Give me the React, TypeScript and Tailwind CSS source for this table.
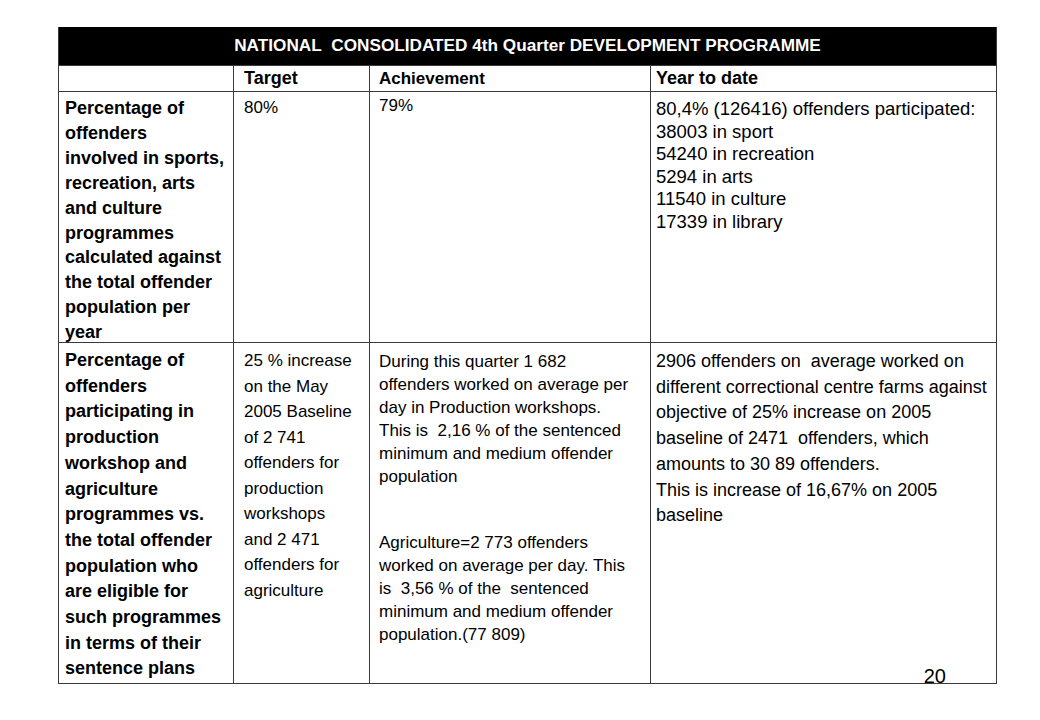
import React from "react";

const ff = { fontFamily: '"Liberation Sans", Arial, sans-serif' };

function Lines({ lines }: { lines: string[] }) {
  return (
    <>
      {lines.map((l, i) => (
        <div key={i} className="whitespace-pre">
          {l === "" ? "\u00a0" : l}
        </div>
      ))}
    </>
  );
}

export default function App() {
  const cell = "border-l border-t border-[#3a3a3a]";
  return (
    <div className="w-[1040px] h-[720px] bg-white text-black" style={ff}>
      <div className="ml-[58px] pt-[27px]">
        <div className="grid grid-cols-[175px_136px_281px_346px] w-[939px] border-r border-b border-[#3a3a3a]">
          {/* title */}
          <div className="col-span-4 h-[38px] bg-black border-l border-[#3a3a3a] flex items-center justify-center text-white font-bold text-[17.2px]">
            NATIONAL&nbsp; CONSOLIDATED 4th Quarter DEVELOPMENT PROGRAMME
          </div>
          {/* header row */}
          <div className={`${cell} h-[26px]`}></div>
          <div className={`${cell} h-[26px] flex items-center pl-[10px] font-bold text-[18px]`}>Target</div>
          <div className={`${cell} h-[26px] flex items-center pl-[9px] font-bold text-[17px]`}>Achievement</div>
          <div className={`${cell} h-[26px] flex items-center pl-[5px] font-bold text-[18px]`}>Year to date</div>

          {/* row 1 */}
          <div className={`${cell} h-[251px] pl-[6px] pt-[4px] font-bold text-[18px] leading-[24.9px]`}>
            <Lines
              lines={[
                "Percentage of",
                "offenders",
                "involved in sports,",
                "recreation, arts",
                "and culture",
                "programmes",
                "calculated against",
                "the total offender",
                "population per",
                "year",
              ]}
            />
          </div>
          <div className={`${cell} pl-[10px] pt-[3px] text-[17px] leading-[25px]`}>80%</div>
          <div className={`${cell} pl-[9px] pt-[1px] text-[17px] leading-[25px]`}>79%</div>
          <div className={`${cell} pl-[5px] pt-[6px] text-[18.5px] leading-[22.5px]`}>
            <Lines
              lines={[
                "80,4% (126416) offenders participated:",
                "38003 in sport",
                "54240 in recreation",
                "5294 in arts",
                "11540 in culture",
                "17339 in library",
              ]}
            />
          </div>

          {/* row 2 */}
          <div className={`${cell} h-[341px] pl-[6px] pt-[5px] font-bold text-[18px] leading-[25.7px]`}>
            <Lines
              lines={[
                "Percentage of",
                "offenders",
                "participating in",
                "production",
                "workshop and",
                "agriculture",
                "programmes vs.",
                "the total offender",
                "population who",
                "are eligible for",
                "such programmes",
                "in terms of their",
                "sentence plans",
              ]}
            />
          </div>
          <div className={`${cell} pl-[10px] pt-[5px] text-[17px] leading-[25.5px]`}>
            <Lines
              lines={[
                "25 % increase",
                "on the May",
                "2005 Baseline",
                "of 2 741",
                "offenders for",
                "production",
                "workshops",
                "and 2 471",
                "offenders for",
                "agriculture",
              ]}
            />
          </div>
          <div className={`${cell} pl-[9px] pt-[7px] text-[17px] leading-[23px]`}>
            <Lines
              lines={[
                "During this quarter 1 682",
                "offenders worked on average per",
                "day in Production workshops.",
                "This is  2,16 % of the sentenced",
                "minimum and medium offender",
                "population",
              ]}
            />
            <div className="h-[43px]"></div>
            <Lines
              lines={[
                "Agriculture=2 773 offenders",
                "worked on average per day. This",
                "is  3,56 % of the  sentenced",
                "minimum and medium offender",
                "population.(77 809)",
              ]}
            />
          </div>
          <div className={`${cell} relative pl-[5px] pt-[6px] text-[18px] leading-[25.7px]`}>
            <Lines
              lines={[
                "2906 offenders on  average worked on",
                "different correctional centre farms against",
                "objective of 25% increase on 2005",
                "baseline of 2471  offenders, which",
                "amounts to 30 89 offenders.",
                "This is increase of 16,67% on 2005",
                "baseline",
              ]}
            />
            <div className="absolute right-[50px] bottom-[-5px] text-[20px] leading-[24px]">20</div>
          </div>
        </div>
      </div>
    </div>
  );
}
